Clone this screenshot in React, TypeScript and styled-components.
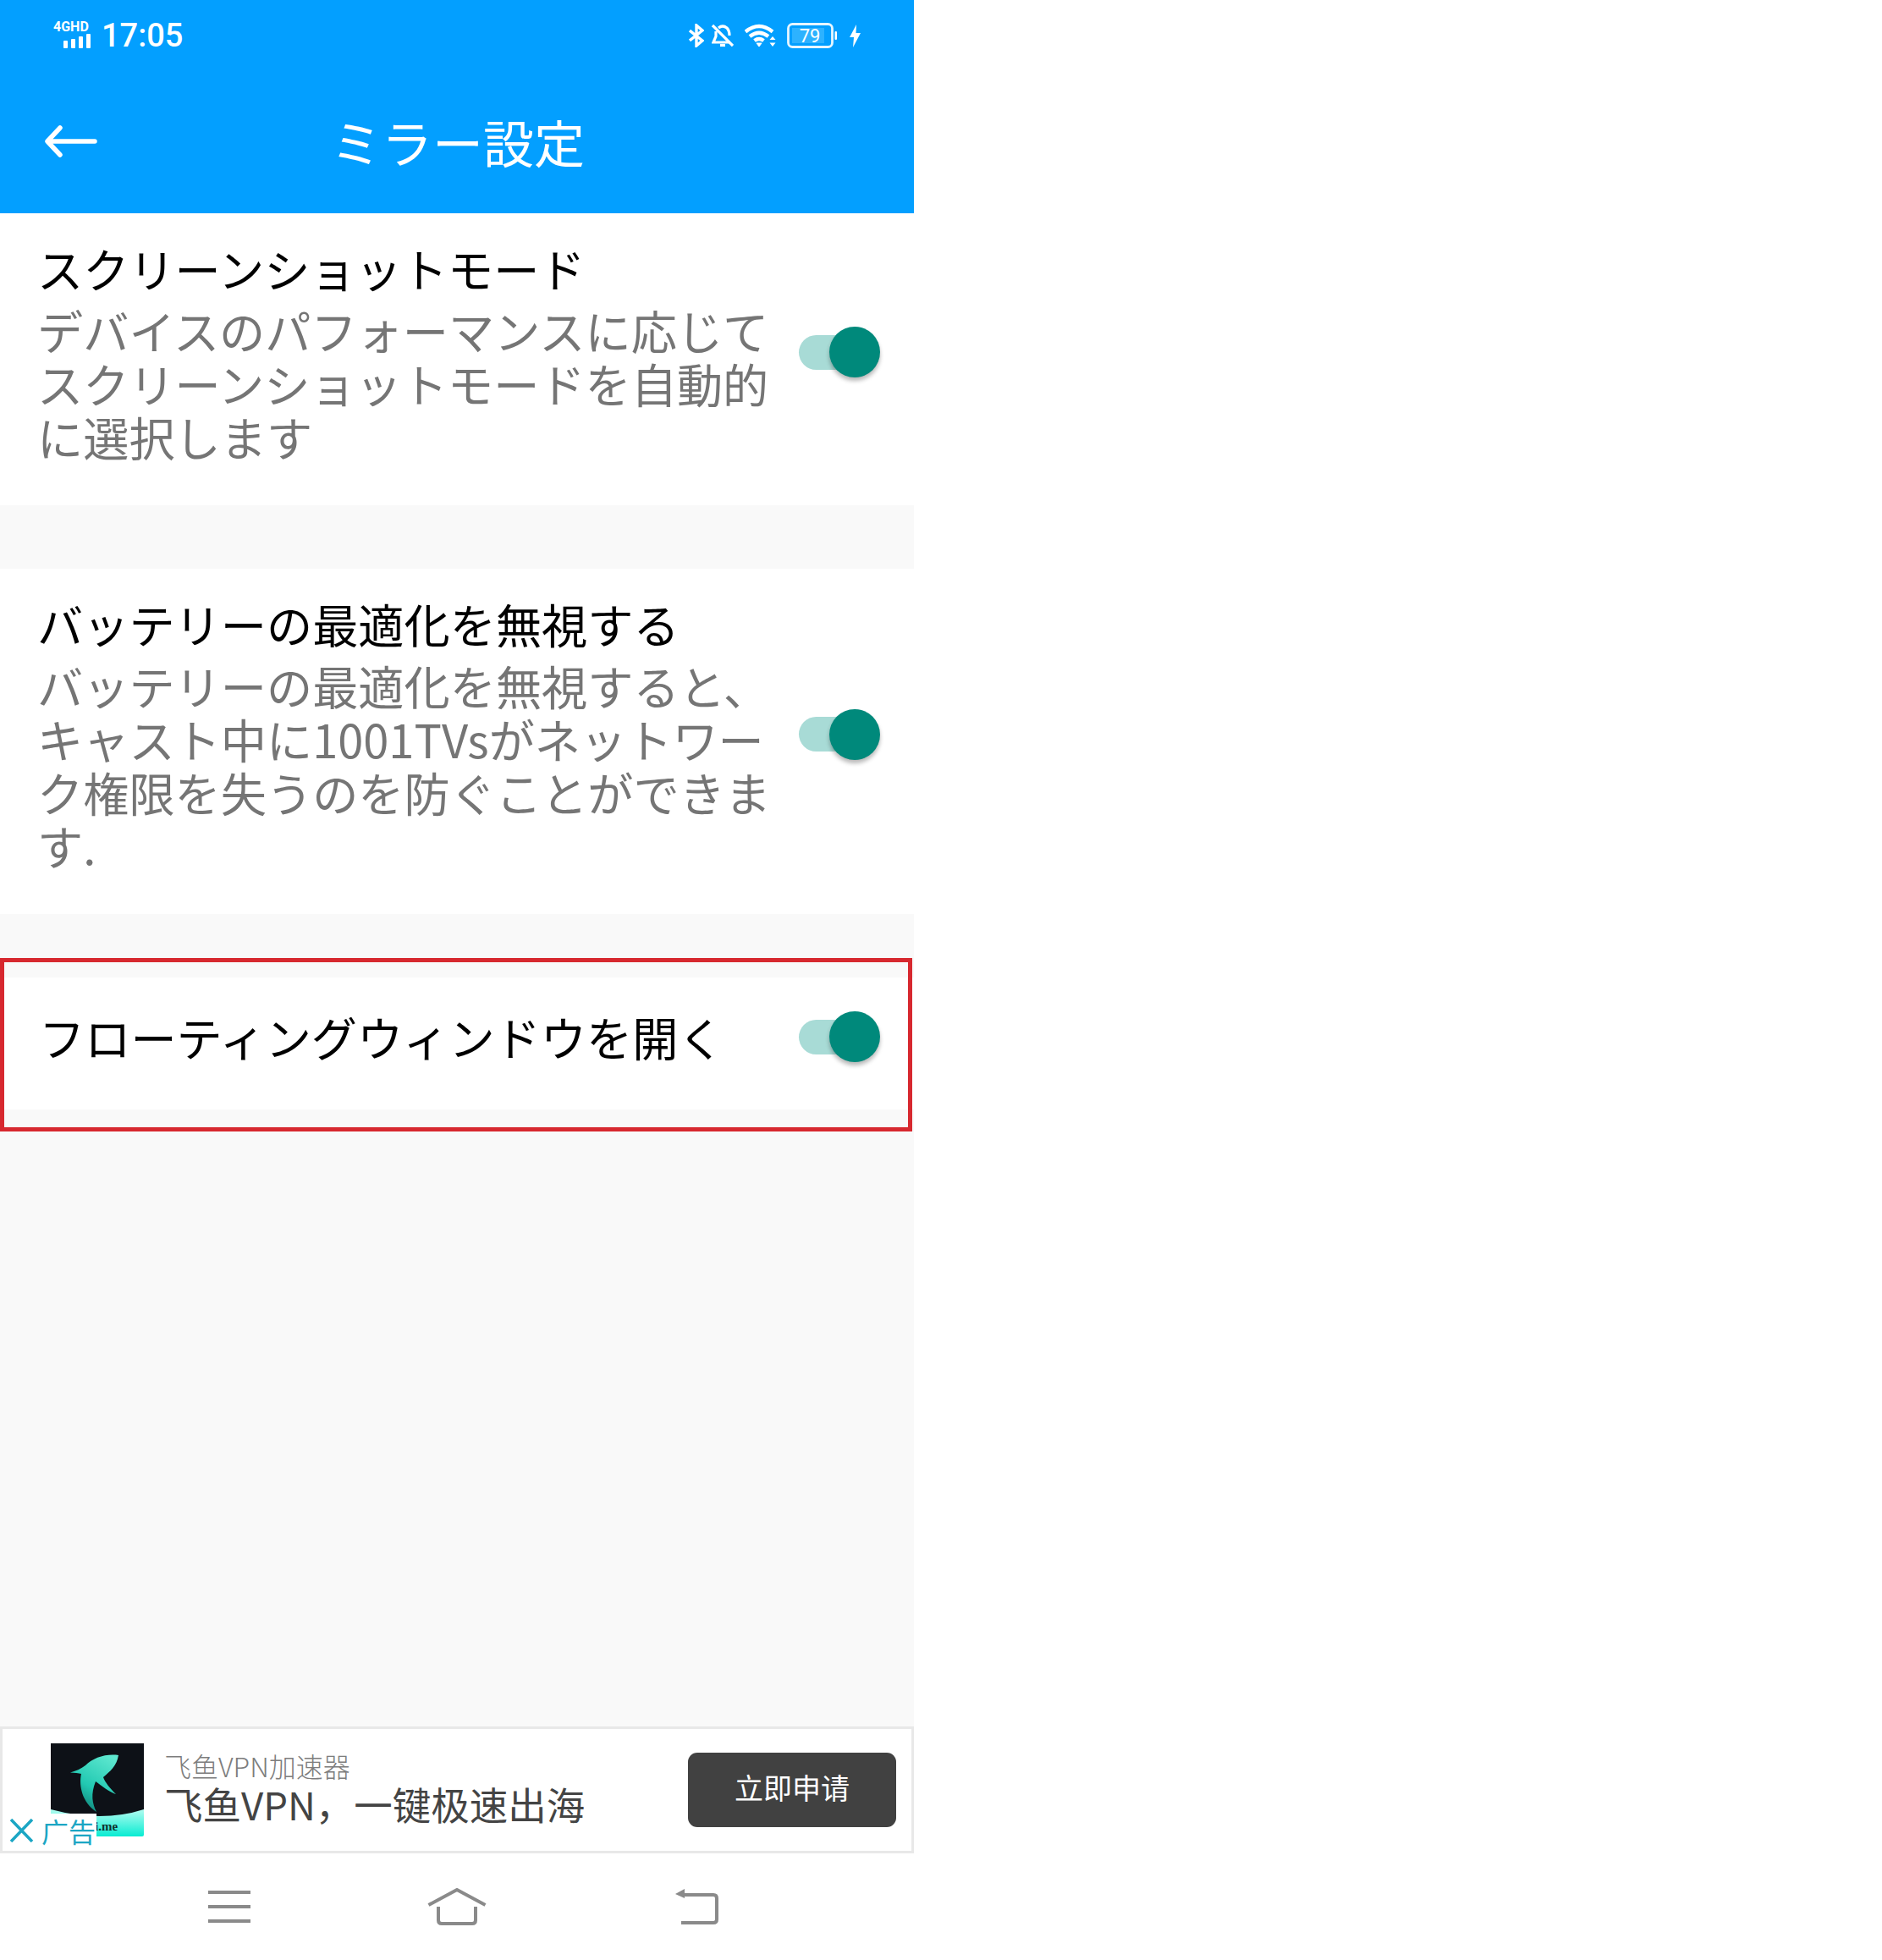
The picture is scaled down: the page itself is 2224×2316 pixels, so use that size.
import React from "react";
import styled, { createGlobalStyle } from "styled-components";

const Global = createGlobalStyle`
  html, body { margin: 0; padding: 0; background: #fff; }
  * { box-sizing: border-box; }
`;

const Phone = styled.div`
  width: 1080px;
  height: 2316px;
  display: flex;
  flex-direction: column;
  background: #f9f9f9;
  font-family: "Noto Sans CJK JP", "Noto Sans", sans-serif;
`;

const Header = styled.header`
  height: 252px;
  flex: none;
  background: #039fff;
  color: #fff;
  display: flex;
  flex-direction: column;
`;

const StatusBar = styled.div`
  height: 84px;
  display: flex;
  align-items: center;
  padding: 0 63px;
`;

const Signal = styled.svg`
  width: 48px;
  height: 40px;
  margin-top: -8px;
  flex: none;
  overflow: visible;
`;

const SignalText = styled.text`
  font-family: "Roboto", sans-serif;
  font-size: 16px;
  font-weight: 700;
  fill: #fff;
`;

const Time = styled.span`
  font-family: "Roboto", sans-serif;
  font-size: 38px;
  line-height: 40px;
  font-weight: 500;
  margin-left: 9px;
`;

const StatusIcons = styled.div`
  margin-left: auto;
  display: flex;
  align-items: center;
`;

const StatusIcon = styled.svg<{ $ml?: number }>`
  flex: none;
  display: block;
  margin-left: ${(p) => p.$ml ?? 0}px;
`;

const BatteryText = styled.text`
  font-family: "Roboto", sans-serif;
  font-size: 22px;
  fill: #fff;
`;

const Toolbar = styled.div`
  flex: 1;
  display: grid;
  grid-template-columns: 1fr auto 1fr;
  align-items: center;
  padding: 0 51px 0 53px;
  margin-top: -2px;
`;

const BackArrow = styled.svg`
  width: 62px;
  height: 38px;
  display: block;
`;

const Title = styled.h1`
  margin: 0;
  font-size: 60px;
  line-height: 80px;
  font-weight: 400;
  white-space: nowrap;
`;

const Row = styled.section<{ $top?: number; $bottom?: number; $left?: number }>`
  flex: none;
  background: #fff;
  display: flex;
  align-items: center;
  justify-content: space-between;
  padding: ${(p) => p.$top ?? 27}px 40px ${(p) => p.$bottom ?? 50}px ${(p) => p.$left ?? 44}px;
`;

const Copy = styled.div`
  min-width: 0;
`;

const RowTitle = styled.div`
  font-size: 54.2px;
  line-height: 76px;
  color: #000;
  white-space: nowrap;
`;

const Desc = styled.div`
  font-size: 54.2px;
  line-height: 63px;
  color: #757575;
  margin-top: 3px;
`;

const DescLine = styled.span`
  display: block;
  white-space: nowrap;
`;

const Gap = styled.div`
  height: 75px;
  flex: none;
`;

const Highlighted = styled.div`
  position: relative;
  flex: none;
`;

const RedBox = styled.div`
  position: absolute;
  left: 0;
  right: 2px;
  top: -23px;
  bottom: -26px;
  border: 5px solid #d7282f;
  pointer-events: none;
`;

const ToggleWrap = styled.div<{ $shift: number }>`
  position: relative;
  width: 96px;
  height: 60px;
  flex: none;
  margin-top: ${(p) => p.$shift}px;
  display: flex;
  align-items: center;
`;

const Track = styled.div`
  width: 85px;
  height: 41px;
  border-radius: 21px;
  background: #a8dbd6;
`;

const Knob = styled.div`
  position: absolute;
  right: 0;
  top: 0;
  width: 60px;
  height: 60px;
  border-radius: 50%;
  background: #00897b;
  box-shadow: 0 4px 5px rgba(0, 0, 0, 0.28);
`;

const Filler = styled.div`
  flex: 1;
`;

const Ad = styled.div`
  position: relative;
  height: 150px;
  flex: none;
  background: #fff;
  border: 3px solid #e8e8e8;
  display: flex;
  align-items: center;
  padding: 0 18px 0 57px;
  font-family: "Noto Sans CJK SC", "Noto Sans", sans-serif;
`;

const Logo = styled.svg`
  width: 110px;
  height: 110px;
  flex: none;
  display: block;
`;

const LogoText = styled.text`
  font-family: "Liberation Serif", serif;
  font-size: 15px;
  font-weight: 700;
  fill: #10302e;
`;

const AdCopy = styled.div`
  margin-left: 24px;
  display: flex;
  flex-direction: column;
  margin-top: -8px;
`;

const AdName = styled.div`
  font-size: 32px;
  line-height: 40px;
  color: #7d7d7d;
  font-weight: 300;
  white-space: nowrap;
`;

const AdText = styled.div`
  font-size: 45.5px;
  line-height: 50px;
  color: #444;
  white-space: nowrap;
`;

const AdButton = styled.div`
  margin-left: auto;
  width: 246px;
  height: 88px;
  border-radius: 11px;
  background: #414141;
  color: #fff;
  font-size: 34px;
  line-height: 82px;
  display: flex;
  align-items: flex-start;
  justify-content: center;
`;

const AdBadge = styled.div`
  position: absolute;
  left: 0;
  bottom: 0;
  width: 111px;
  height: 44px;
  background: #fff;
  display: flex;
  align-items: center;
  padding: 0 0 4px 8px;
  color: #1ba6c4;
  font-size: 32px;
  line-height: 38px;
`;

const BadgeX = styled.svg`
  width: 29px;
  height: 28px;
  margin-right: 9px;
  flex: none;
`;

const NavBar = styled.nav`
  flex: 1 0 126px;
  max-height: 126px;
  background: #fff;
  display: flex;
  align-items: flex-start;
  padding: 41px 0 0 246px;
`;

const NavIcon = styled.svg<{ $ml?: number }>`
  display: block;
  flex: none;
  margin-left: ${(p) => p.$ml ?? 0}px;
  fill: none;
  stroke: #8a8a8a;
  stroke-width: 4px;
`;

const Toggle = ({ shift = 6 }: { shift?: number }) => (
  <ToggleWrap $shift={shift}>
    <Track />
    <Knob />
  </ToggleWrap>
);

export default function App() {
  return (
    <>
      <Global />
      <Phone>
        <Header>
          <StatusBar>
            <Signal viewBox="0 -6 48 40">
              <SignalText x="0" y="13">4GHD</SignalText>
              <rect x="12" y="24" width="5" height="9" rx="1" fill="#fff" />
              <rect x="21" y="22" width="5" height="11" rx="1" fill="#fff" />
              <rect x="30" y="19" width="5" height="14" rx="1" fill="#fff" />
              <rect x="39" y="16" width="5" height="17" rx="1" fill="#fff" />
            </Signal>
            <Time>17:05</Time>
            <StatusIcons>
              <StatusIcon width="18" height="28" viewBox="0 0 18 28" fill="none" stroke="#fff" strokeWidth="3.4">
                <path d="M1 8 L16 20 L9 26 V2 L16 8 L1 20" />
              </StatusIcon>
              <StatusIcon $ml={9} width="26" height="28" viewBox="0 0 26 28" fill="none" stroke="#fff" strokeWidth="3.2">
                <path d="M1 2 L25 26" />
                <path d="M8 5 Q13 1 18 5 Q21 8 21 14 M5 9 V15 L2 22 H22" />
                <path d="M10 25.5 H16" />
              </StatusIcon>
              <StatusIcon $ml={13} width="38" height="28" viewBox="0 0 38 28" fill="none" stroke="#fff" strokeWidth="4.4">
                <path d="M1 9.5 Q17 -3.5 33 9.5" />
                <path d="M6 15 Q17 6.5 28 15" />
                <path d="M11.5 20 Q17 16 22.5 20" />
                <path d="M14 23 L17 27 L20 23 Z" fill="#fff" strokeWidth="1" />
                <path d="M33 15 L36.5 19 H29.5 Z M33 27 L29.5 22.5 H36.5 Z" fill="#fff" stroke="none" />
              </StatusIcon>
              <StatusIcon $ml={12} width="60" height="30" viewBox="0 0 60 30">
                <rect x="1.5" y="1.5" width="52" height="27" rx="5" fill="none" stroke="#fff" strokeOpacity=".9" strokeWidth="2.8" />
                <rect x="6" y="6" width="38" height="18" fill="#2db2ff" />
                <rect x="56.5" y="10" width="2.5" height="10" rx="1" fill="#fff" />
                <BatteryText x="27" y="23" textAnchor="middle">79</BatteryText>
              </StatusIcon>
              <StatusIcon $ml={14} width="13" height="27" viewBox="0 0 13 27" fill="#fff">
                <path d="M8 0 L0 15 H5 L4 27 L13 10 H7.5 Z" />
              </StatusIcon>
            </StatusIcons>
          </StatusBar>
          <Toolbar>
            <BackArrow viewBox="0 0 62 38" fill="none" stroke="#fff" strokeWidth="5.5" strokeLinecap="round" strokeLinejoin="round">
              <path d="M59 19 H4 M18 3 L3 19 L18 35" />
            </BackArrow>
            <Title>ミラー設定</Title>
            <span />
          </Toolbar>
        </Header>

        <Row>
          <Copy>
            <RowTitle>スクリーンショットモード</RowTitle>
            <Desc>
              <DescLine>デバイスのパフォーマンスに応じて</DescLine>
              <DescLine>スクリーンショットモードを自動的</DescLine>
              <DescLine>に選択します</DescLine>
            </Desc>
          </Copy>
          <Toggle />
        </Row>
        <Gap />
        <Row>
          <Copy>
            <RowTitle>バッテリーの最適化を無視する</RowTitle>
            <Desc>
              <DescLine>バッテリーの最適化を無視すると、</DescLine>
              <DescLine>キャスト中に1001TVsがネットワー</DescLine>
              <DescLine>ク権限を失うのを防ぐことができま</DescLine>
              <DescLine>す.</DescLine>
            </Desc>
          </Copy>
          <Toggle />
        </Row>
        <Gap />
        <Highlighted>
          <Row $top={32} $bottom={48} $left={46}>
            <Copy>
              <RowTitle>フローティングウィンドウを開く</RowTitle>
            </Copy>
            <Toggle shift={0} />
          </Row>
          <RedBox />
        </Highlighted>
        <Filler />

        <Ad>
          <Logo viewBox="0 0 110 110">
            <defs>
              <linearGradient id="fish" x1="0.8" y1="0" x2="0.3" y2="1">
                <stop offset="0" stopColor="#5fe8d0" />
                <stop offset="0.6" stopColor="#22c9b2" />
                <stop offset="1" stopColor="#0f7f76" />
              </linearGradient>
              <linearGradient id="base" x1="0" y1="0" x2="0" y2="1">
                <stop offset="0.65" stopColor="#d4fff6" />
                <stop offset="1" stopColor="#08ecd2" />
              </linearGradient>
            </defs>
            <rect width="110" height="110" rx="2" fill="url(#base)" />
            <path d="M0 0 H110 V78 Q60 94 0 78 Z" fill="#0d1117" />
            <path
              d="M80 14 C65 12 50 17 41 26 C36 30 29 33 23 34.5 C28 35 33 35 36 36 C33 50 37 70 54 81 C49 71 47 60 53 45 C60 50 70 58 77 60 C70 53 64 46 62 40 C70 33 78 27 80 14 Z"
              fill="url(#fish)"
            />
            <LogoText x="52" y="103">i.me</LogoText>
          </Logo>
          <AdCopy>
            <AdName>飞鱼VPN加速器</AdName>
            <AdText>飞鱼VPN，一键极速出海</AdText>
          </AdCopy>
          <AdButton>立即申请</AdButton>
          <AdBadge>
            <BadgeX viewBox="0 0 29 28" fill="none" stroke="#1ba6c4" strokeWidth="3.5">
              <path d="M2 1 L27 27 M27 1 L2 27" />
            </BadgeX>
            <span>广告</span>
          </AdBadge>
        </Ad>

        <NavBar>
          <NavIcon width="50" height="42" viewBox="0 0 50 42">
            <path d="M0 5 H50 M0 22 H50 M0 39 H50" />
          </NavIcon>
          <NavIcon $ml={209} width="70" height="44" viewBox="0 0 70 44">
            <path d="M1.5 20 L35 2 L68.5 20" />
            <path d="M13 22 V38 Q13 42 17 42 H53 Q57 42 57 38 V22" />
          </NavIcon>
          <NavIcon $ml={222} width="52" height="43" viewBox="0 0 52 43">
            <path d="M10 8 H46 Q50 8 50 12 V37 Q50 41 46 41 H8" />
            <path d="M12 1 L1 7 L12 12 Z" fill="#8a8a8a" stroke="none" />
          </NavIcon>
        </NavBar>
      </Phone>
    </>
  );
}
